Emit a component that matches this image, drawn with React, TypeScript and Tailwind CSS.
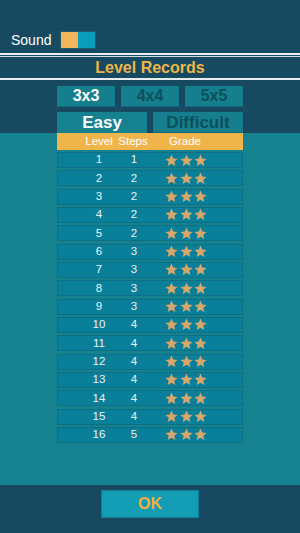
import React from 'react';

const records: [number, number][] = [
  [1, 1], [2, 2], [3, 2], [4, 2], [5, 2], [6, 3], [7, 3], [8, 3],
  [9, 3], [10, 4], [11, 4], [12, 4], [13, 4], [14, 4], [15, 4], [16, 5],
];

const Star: React.FC = () => (
  <svg width="13" height="13" viewBox="0 0 24 24">
    <path
      d="M12 1l3.3 7.3 7.9.8-6 5.3 1.8 7.8L12 18.2l-7 4 1.8-7.8-6-5.3 7.9-.8z"
      fill="#d6a66a"
    />
  </svg>
);

const App: React.FC = () => {
  return (
    <div className="w-[300px] h-[533px] bg-[#174a60] flex flex-col font-['Liberation_Sans',Arial,sans-serif] overflow-hidden leading-none">
      {/* top */}
      <div className="h-[133px] shrink-0 flex flex-col">
        <div className="shrink-0 flex items-center pl-[11px] pt-[31px] h-[49px]">
          <span className="text-[14px] text-white w-[49px]">Sound</span>
          <div className="flex h-[18px] border border-[#1d5a6c]">
            <div className="w-[17px] bg-[#f2b55c]" />
            <div className="w-[17px] bg-[#0b9dbc]" />
          </div>
        </div>
        <div className="shrink-0 mt-[4px] border-t-2 border-[#e8eef0]" />
        <div className="shrink-0 mt-[1px] border-t border-[#cfdde2]" />
        <div className="shrink-0 h-[21px] flex items-center justify-center">
          <span className="text-[16px] font-bold text-[#f0b446]">Level Records</span>
        </div>
        <div className="shrink-0 border-t-2 border-[#e8eef0]" />
        <div className="shrink-0 mt-[6px] flex justify-center gap-[6px]">
          <div className="w-[58px] h-[21px] bg-[#167f8e] border-b border-[#10687a] flex items-center justify-center text-[16px] font-bold text-white">3x3</div>
          <div className="w-[58px] h-[21px] bg-[#167f8e] border-b border-[#10687a] flex items-center justify-center text-[16px] font-bold text-[#0c505b]">4x4</div>
          <div className="w-[58px] h-[21px] bg-[#167f8e] border-b border-[#10687a] flex items-center justify-center text-[16px] font-bold text-[#0c505b]">5x5</div>
        </div>
        <div className="mt-[5px] flex justify-center gap-[6px] flex-1 min-h-0">
          <div className="w-[90px] bg-[#16818f] flex items-center justify-center text-[17px] font-bold text-white">Easy</div>
          <div className="w-[90px] bg-[#167f8e] border-b border-[#10687a] flex items-center justify-center text-[17px] font-bold text-[#0c505b]">Difficult</div>
        </div>
      </div>

      {/* records panel */}
      <div className="flex-1 bg-[#16818f] flex flex-col items-center">
        <div className="w-[186px] h-[17px] bg-[#f0b54a] flex items-center text-[11.5px] text-white">
          <span className="w-[82px] text-center pl-[2px]">Level</span>
          <span className="w-[0px] flex justify-center relative -left-[6px]"><span className="shrink-0">Steps</span></span>
          <span className="ml-[22px] w-[48px] text-center">Grade</span>
        </div>
        <div className="mt-[2px] flex flex-col gap-[2.33px]">
          {records.map(([level, steps]) => (
            <div
              key={level}
              className="w-[186px] h-[16px] bg-[#0a7f99] border border-[#0d6f84] flex items-center text-[11.5px] text-[#e8f4f6]"
            >
              <span className="w-[82px] text-center">{level}</span>
              <span className="w-[0px] flex justify-center relative -left-[6px]"><span className="shrink-0">{steps}</span></span>
              <span className="ml-[25px] flex gap-[1.5px]">
                <Star />
                <Star />
                <Star />
              </span>
            </div>
          ))}
        </div>
      </div>

      {/* bottom */}
      <div className="h-[48px] shrink-0 flex justify-center pt-[5px]">
        <div className="w-[98px] h-[28px] bg-[#139db5] border border-[#0f7f97] flex items-center justify-center text-[16px] font-bold text-[#f0b040]">
          OK
        </div>
      </div>
    </div>
  );
};

export default App;
